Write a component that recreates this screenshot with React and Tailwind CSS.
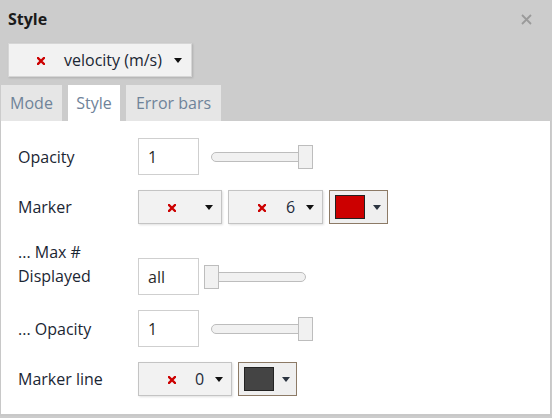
const font = { fontFamily: "'Open Sans', 'Noto Sans', sans-serif" };

function RedX({ className = "" }) {
  return (
    <svg width="8" height="8" viewBox="0 0 8 8" className={className}>
      <path d="M1 1L7 7M7 1L1 7" stroke="#cc0000" strokeWidth="2.4" strokeLinecap="square" />
    </svg>
  );
}

function Caret({ color = "#111" }) {
  return (
    <svg width="8" height="5" viewBox="0 0 8 5">
      <path d="M0 0H8L4 5Z" fill={color} />
    </svg>
  );
}

function Dropdown({ width, value, xPos, valuePos }) {
  return (
    <div
      className={`relative h-[34px] ${width} shrink-0 border border-[#c4c4c4] bg-[#f2f2f2] shadow-[1px_1px_2px_rgba(0,0,0,0.12)]`}
    >
      <RedX className={`absolute top-[13px] ${xPos}`} />
      {value && (
        <span className={`absolute top-[4px] text-[16px] text-[#1f2b3a] ${valuePos}`}>{value}</span>
      )}
      <div className="absolute right-[8px] top-[14px] flex">
        <Caret />
      </div>
    </div>
  );
}

function ColorButton({ swatch }) {
  return (
    <div className="flex h-[34px] w-[59px] shrink-0 items-center border border-[#8c7a66] bg-[#efefef] pl-[5px]">
      <div className={`h-[24px] w-[30px] border border-[#222] ${swatch}`} />
      <div className="ml-[8px] flex">
        <Caret color="#2b3440" />
      </div>
    </div>
  );
}

function Slider({ atEnd }) {
  return (
    <div className="relative ml-[5px] h-[24px] w-[108px] shrink-0">
      <div className="absolute left-[7px] right-[6px] top-[7px] h-[10px] rounded-full border border-[#bdbdbd] bg-[#f1f1f1]" />
      <div
        className={`absolute top-0 h-[24px] w-[15px] border border-[#bdbdbd] bg-[#f1f1f1] ${
          atEnd ? "left-[94px]" : "left-0"
        }`}
      />
    </div>
  );
}

function NumberInput({ value }) {
  return (
    <div className="flex h-[37px] w-[61px] shrink-0 items-center border border-[#cfcfcf] bg-white pl-[9px] text-[16px] text-[#2a2a2a]">
      {value}
    </div>
  );
}

export default function App() {
  return (
    <div className="flex h-[418px] w-[552px] flex-col overflow-hidden bg-[#cccccc]" style={font}>
      {/* Header */}
      <div className="flex h-[38px] items-center justify-between pl-[8px] pr-[20px]">
        <span className="text-[16px] font-bold text-[#1a1a1a]">Style</span>
        <svg width="11" height="11" viewBox="0 0 11 11">
          <path d="M1 1L10 10M10 1L1 10" stroke="#9a9a9a" strokeWidth="1.8" />
        </svg>
      </div>

      {/* Trace selector */}
      <div className="mt-[5px] pl-[8px]">
        <div className="relative flex h-[34px] w-[184px] items-center border border-[#d6d6d6] bg-[#f2f2f2] shadow-[1px_1px_2px_rgba(0,0,0,0.15)]">
          <RedX className="absolute left-[28px] top-[13px]" />
          <span className="absolute left-[55px] top-[4px] text-[16px] text-[#1a2633]">velocity (m/s)</span>
          <div className="absolute right-[9px] top-[14px] flex">
            <Caret />
          </div>
        </div>
      </div>

      {/* Tabs */}
      <div className="mt-[8px] flex h-[36px] gap-[6px] pl-[1px]">
        <div className="flex w-[61px] items-center justify-center bg-[#e6e6e6] text-[16px] text-[#6f8399]">Mode</div>
        <div className="flex w-[52px] items-center justify-center bg-white text-[16px] text-[#6f8399]">Style</div>
        <div className="flex w-[95px] items-center justify-center bg-[#e6e6e6] text-[16px] text-[#6f8399]">Error bars</div>
      </div>

      {/* Panel */}
      <div className="flex h-[295px] w-[551px] flex-col border-x border-b-2 border-[#c8c8c8] bg-white pl-[17px] pt-[17px] text-[16px] text-[#1b2633]">
        <div className="flex h-[37px] items-center">
          <span className="w-[120px] shrink-0">Opacity</span>
          <NumberInput value="1" />
          <Slider atEnd />
        </div>

        <div className="mt-[15px] flex h-[34px] items-center">
          <span className="w-[120px] shrink-0">Marker</span>
          <Dropdown width="w-[84px]" xPos="left-[29px]" />
          <div className="w-[6px]" />
          <Dropdown width="w-[95px]" value="6" xPos="left-[29px]" valuePos="left-[57px]" />
          <div className="w-[6px]" />
          <ColorButton swatch="bg-[#cc0000]" />
        </div>

        <div className="mt-[16px] flex h-[55px] items-start">
          <span className="w-[120px] shrink-0 leading-[24px]">
            ... Max #
            <br />
            Displayed
          </span>
          <div className="mt-[18px] flex items-center">
            <NumberInput value="all" />
            <Slider />
          </div>
        </div>

        <div className="mt-[15px] flex h-[37px] items-center">
          <span className="w-[120px] shrink-0">... Opacity</span>
          <NumberInput value="1" />
          <Slider atEnd />
        </div>

        <div className="mt-[15px] flex h-[34px] items-center">
          <span className="w-[120px] shrink-0">Marker line</span>
          <Dropdown width="w-[94px]" value="0" xPos="left-[29px]" valuePos="left-[56px]" />
          <div className="w-[6px]" />
          <ColorButton swatch="bg-[#444444]" />
        </div>
      </div>
    </div>
  );
}
